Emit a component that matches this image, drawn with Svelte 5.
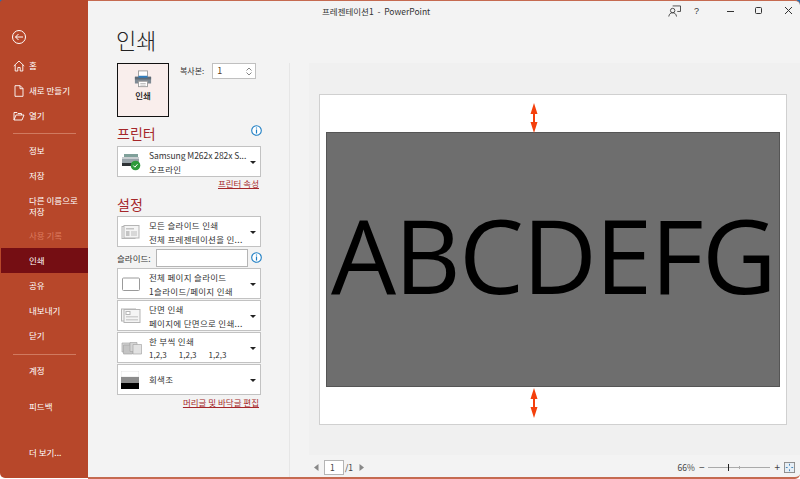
<script>
  const navTop = [
    { label: '홈', icon: 'home' },
    { label: '새로 만들기', icon: 'doc' },
    { label: '열기', icon: 'folder' }
  ];
  const chevron = 'M0 0h6l-3 3z';
</script>

<div class="window">
  <nav class="side">
    <svg class="back" width="16" height="16" viewBox="0 0 16 16" fill="none" stroke="#fff" stroke-width="1">
      <circle cx="8" cy="8" r="6.5" />
      <path d="M12 8H4.5M7.5 5 4.5 8l3 3" />
    </svg>
    {#each navTop as n}
      <div class="item icon-item">
        <svg class="nicon" width="12" height="12" viewBox="0 0 12 12" fill="none" stroke="#fff" stroke-width="0.9">
          {#if n.icon === 'home'}
            <path d="M.8 6 6 1l5.2 5M2.2 5v6h2.6V7.5h2.4V11h2.6V5" />
          {:else if n.icon === 'doc'}
            <path d="M2 .7h5.2L10 3.5v7.8H2zM7 .7v3h3" />
          {:else}
            <path d="M1 10V2.5h3l1 1h3.5v1.5M1 10l2-5h8l-2 5z" />
          {/if}
        </svg>
        <span>{n.label}</span>
      </div>
    {/each}
    <div class="rule first"></div>
    <div class="item">정보</div>
    <div class="item">저장</div>
    <div class="item double">다른 이름으로<br />저장</div>
    <div class="item muted">사용 기록</div>
    <div class="item active">인쇄</div>
    <div class="item">공유</div>
    <div class="item">내보내기</div>
    <div class="item">닫기</div>
    <div class="rule second"></div>
    <div class="item">계정</div>
    <div class="item account">피드백</div>
    <div class="item more">더 보기...</div>
  </nav>

  <main class="main">
    <header class="titlebar">
      <div class="doc-title">프레젠테이션1&nbsp; -&nbsp; PowerPoint</div>
      <div class="win-btns">
        <svg width="13" height="12" viewBox="0 0 14 13" fill="none" stroke="#333" stroke-width="0.9">
          <path d="M5 1h8.500v6H10" />
          <circle cx="5" cy="6" r="2.400" />
          <path d="M.8 12.500c.4-2.800 2-4.100 4.200-4.100S8.800 9.700 9.200 12.500" />
        </svg>
        <span class="help">?</span>
        <svg width="10" height="10" viewBox="0 0 10 10" stroke="#333" fill="none"><path d="M1 5.500h7" /></svg>
        <svg width="10" height="10" viewBox="0 0 10 10" stroke="#333" fill="none"><rect x="1.500" y="1.500" width="6" height="6" rx="1" /></svg>
        <svg width="10" height="10" viewBox="0 0 10 10" stroke="#333" fill="none"><path d="M1 1l7 7M8 1 1 8" /></svg>
      </div>
    </header>

    <div class="content">
      <section class="panel">
        <h1>인쇄</h1>
        <div class="print-row">
          <button class="print-btn">
            <svg width="18" height="18" viewBox="0 0 20 20">
              <rect x="5" y="1" width="10" height="6" fill="#fff" stroke="#9a9a9a" />
              <path d="M1 7.500h18V15H1z" fill="#7f8a94" />
              <rect x="1" y="7.500" width="18" height="3" fill="#5f6b76" />
              <rect x="5" y="6.500" width="10" height="2" fill="#2f7fc1" />
              <rect x="5" y="12.500" width="10" height="6" fill="#fff" stroke="#9a9a9a" />
              <path d="M7 15h6M7 16.800h6" stroke="#bbb" />
            </svg>
            <span>인쇄</span>
          </button>
          <label class="copies">
            <span>복사본:</span>
            <div class="spin">
              <span class="spin-val">1</span>
              <div class="spin-arrows">
                <svg width="6" height="4" viewBox="0 0 6 4" fill="none" stroke="#666" stroke-width="0.8"><path d="M.5 3.500 3 1l2.500 2.500" /></svg>
                <svg width="6" height="4" viewBox="0 0 6 4" fill="none" stroke="#666" stroke-width="0.8"><path d="M.5.500 3 3 5.500.500" /></svg>
              </div>
            </div>
          </label>
        </div>

        <div class="heading-row printer-head">
          <h2>프린터</h2>
          <svg class="info" width="11" height="11" viewBox="0 0 11 11"><circle cx="5.500" cy="5.500" r="4.800" fill="#fff" stroke="#1f7fc4" stroke-width="1.100" /><path d="M5.500 2.400v1.200M5.500 4.600v3.800" stroke="#1f7fc4" stroke-width="1.200" /></svg>
        </div>
        <div class="dd">
          <svg class="dd-icon" width="20" height="18" viewBox="0 0 20 18">
            <rect x="3" y="1" width="14" height="3" fill="#7fa09a" />
            <rect x="1" y="4" width="17" height="8" fill="#9aa4aa" />
            <rect x="1" y="4" width="17" height="2" fill="#c8cdd0" />
            <rect x="1" y="10" width="17" height="3" fill="#2e3336" />
            <circle cx="14.500" cy="12.500" r="4.800" fill="#2e9a3c" />
            <path d="M12.300 12.500l1.600 1.700 2.600-3" fill="none" stroke="#fff" />
          </svg>
          <div class="dd-text"><div class="latin">Samsung M262x 282x S...</div><div>오프라인</div></div>
          <svg class="caret" width="6" height="3" viewBox="0 0 6 3"><path d={chevron} /></svg>
        </div>
        <div class="link-row"><a href="#p">프린터 속성</a></div>

        <h2 class="settings">설정</h2>
        <div class="dd">
          <svg class="dd-icon" width="20" height="16" viewBox="0 0 20 16" fill="#f4f4f4" stroke="#b5b5b5">
            <rect x="1" y="2.500" width="13" height="12" />
            <rect x="3" y="1.500" width="15" height="12.500" />
            <rect x="5" y="4" width="8" height="1.500" fill="#c4c4c4" stroke="none" />
            <rect x="5" y="7" width="3.500" height="5" fill="#c4c4c4" stroke="none" />
            <rect x="10" y="7" width="6" height="5" fill="#d8d8d8" stroke="none" />
          </svg>
          <div class="dd-text"><div>모든 슬라이드 인쇄</div><div>전체 프레젠테이션을 인...</div></div>
          <svg class="caret" width="6" height="3" viewBox="0 0 6 3"><path d={chevron} /></svg>
        </div>
        <div class="slides-row">
          <span class="slides-label">슬라이드:</span>
          <div class="slides-input"></div>
          <svg class="info" width="11" height="11" viewBox="0 0 11 11"><circle cx="5.500" cy="5.500" r="4.800" fill="#fff" stroke="#1f7fc4" stroke-width="1.100" /><path d="M5.500 2.400v1.200M5.500 4.600v3.800" stroke="#1f7fc4" stroke-width="1.200" /></svg>
        </div>
        <div class="dd stacked">
          <svg class="dd-icon" width="20" height="16" viewBox="0 0 20 16"><rect x="1.500" y="2" width="17" height="12.500" rx="1" fill="#fff" stroke="#9a9a9a" /></svg>
          <div class="dd-text"><div>전체 페이지 슬라이드</div><div>1슬라이드/페이지 인쇄</div></div>
          <svg class="caret" width="6" height="3" viewBox="0 0 6 3"><path d={chevron} /></svg>
        </div>
        <div class="dd stacked">
          <svg class="dd-icon" width="20" height="16" viewBox="0 0 20 16" fill="#f4f4f4" stroke="#b5b5b5">
            <rect x=".5" y="1" width="14" height="12" />
            <rect x="3" y="1.500" width="16" height="13" />
            <rect x="5" y="3.500" width="4" height="3" fill="#fff" />
            <rect x="5" y="8" width="12" height="1.500" fill="#d0d0d0" stroke="none" />
            <rect x="5" y="11" width="12" height="1.500" fill="#d0d0d0" stroke="none" />
          </svg>
          <div class="dd-text"><div>단면 인쇄</div><div>페이지에 단면으로 인쇄...</div></div>
          <svg class="caret" width="6" height="3" viewBox="0 0 6 3"><path d={chevron} /></svg>
        </div>
        <div class="dd stacked">
          <svg class="dd-icon" width="21" height="14" viewBox="0 0 21 14" fill="#d4d4d4" stroke="#a8a8a8" stroke-width="0.7">
            <path d="M1 2h8v9H1z" /><path d="M2.500 4h9v9h-9z" fill="#c4c4c4" />
            <path d="M9 1.500h7v9H9z" /><path d="M12 3.500h8.500V13H12z" fill="#e2e2e2" />
          </svg>
          <div class="dd-text"><div>한 부씩 인쇄</div><div class="collate"><span>1,2,3</span><span>1,2,3</span><span>1,2,3</span></div></div>
          <svg class="caret" width="6" height="3" viewBox="0 0 6 3"><path d={chevron} /></svg>
        </div>
        <div class="dd stacked single">
          <svg class="dd-icon" width="18" height="18" viewBox="0 0 18 18">
            <rect width="18" height="6" fill="#fff" stroke="#ccc" stroke-width="0.5" />
            <rect y="6" width="18" height="6" fill="#8c8c8c" />
            <rect y="12" width="18" height="6" fill="#000" />
          </svg>
          <div class="dd-text"><div>회색조</div></div>
          <svg class="caret" width="6" height="3" viewBox="0 0 6 3"><path d={chevron} /></svg>
        </div>
        <div class="link-row bottom"><a href="#h">머리글 및 바닥글 편집</a></div>
      </section>

      <section class="preview">
        <div class="canvas">
          <div class="page">
            <div class="slide">ABCDEFG</div>
            <svg class="arrow top" width="8" height="30" viewBox="0 0 8 30"><path d="M4 0 7.500 11H5V19H7.500L4 30 .5 19H3V11H.5z" fill="#f4400c" /></svg>
            <svg class="arrow bot" width="8" height="30" viewBox="0 0 8 30"><path d="M4 0 7.500 11H5V19H7.500L4 30 .5 19H3V11H.5z" fill="#f4400c" /></svg>
          </div>
        </div>
        <footer class="status">
          <div class="pager">
            <svg width="5" height="7" viewBox="0 0 5 7"><path d="M4.500 0v7L0 3.500z" fill="#888" /></svg>
            <div class="page-box">1</div>
            <span>/1</span>
            <svg width="5" height="7" viewBox="0 0 5 7"><path d="M.5 0v7L5 3.500z" fill="#888" /></svg>
          </div>
          <div class="zoom">
            <span>66%</span>
            <span class="pm">−</span>
            <div class="slider"><i class="thumb"></i><i class="mid"></i></div>
            <span class="pm">+</span>
            <svg width="11" height="11" viewBox="0 0 12 12"><rect x=".5" y=".5" width="11" height="11" fill="#e6eef5" stroke="#8a8a8a" /><path d="M6 2v2M6 8v2M2 6h2M8 6h2" stroke="#3a7fb5" /></svg>
          </div>
        </footer>
      </section>
    </div>
  </main>
</div>

<style>
  :global(body) { margin: 0; }
  .window {
    width: 800px;
    height: 479px;
    display: flex;
    overflow: hidden;
    font-family: "Noto Sans CJK KR", "Noto Sans", sans-serif;
    background: linear-gradient(#1f6fb5 0 20px, #fff 20px);
  }
  .side {
    width: 88px;
    height: 478px;
    flex: none;
    background: #b7472a;
    color: #fff;
    font-size: 8.500px;
    display: flex;
    flex-direction: column;
    border-top-left-radius: 3px;
    border-bottom-left-radius: 5px;
  }
  .back { margin: 29px 0 8px 11px; flex: none; }
  .item {
    height: 25px;
    line-height: 25px;
    padding-left: 29px;
    flex: none;
    white-space: nowrap;
  }
  .icon-item { display: flex; align-items: center; padding-left: 13px; }
  .icon-item span { margin-left: 4px; }
  .nicon { flex: none; }
  .double { height: 35px; line-height: 11px; padding-top: 7px; box-sizing: border-box; }
  .muted { color: #dc7a5e; height: 24px; }
  .active { background: #750e13; margin-left: 1px; padding-left: 28px; height: 25px; margin-top: 1px; }
  .rule { height: 1px; background: #d07a60; margin: 0 12px 0 13px; flex: none; }
  .first { margin-top: 5px; margin-bottom: 4px; }
  .second { margin-top: 6px; margin-bottom: 3px; }
  .account { margin-top: 11px; }
  .more { margin-top: 21px; }

  .main {
    flex: 1;
    height: 479px;
    box-sizing: border-box;
    background: #f3f3f3;
    border-top: 1px solid #c56a50;
    border-bottom: 2px solid #c56a50;
    border-top-right-radius: 5px;
    border-bottom-right-radius: 5px;
    display: flex;
    flex-direction: column;
    min-width: 0;
  }
  .titlebar {
    height: 19px;
    flex: none;
    display: flex;
    align-items: center;
    color: #333;
    font-size: 8.500px;
  }
  .doc-title { margin-left: 234px; white-space: nowrap; width: 346px; flex: none; }
  .win-btns { display: flex; align-items: center; flex: 1; }
  .win-btns svg:nth-child(3) { margin-left: 27px; }
  .win-btns svg:nth-child(4) { margin-left: 18px; }
  .win-btns svg:nth-child(5) { margin-left: 20px; }
  .help { margin-left: 13px; font-size: 9px; font-family: "Liberation Sans", sans-serif; }

  .content { flex: 1; display: flex; min-height: 0; }
  .panel {
    width: 202px;
    flex: none;
    box-sizing: border-box;
    padding: 0 29px;
    border-right: 1px solid #e6e6e6;
    margin-top: 43px;
  }
  h1 {
    margin: -41px 0 0 -1px;
    height: 41px;
    font-size: 22px;
    font-weight: 300;
    line-height: 35px;
    color: #222;
  }
  .print-row { display: flex; align-items: flex-start; }
  .print-btn {
    width: 52px;
    height: 54px;
    box-sizing: border-box;
    border: 1px solid #111;
    background: #f9eeec;
    padding: 6px 0 0;
    display: flex;
    flex-direction: column;
    align-items: center;
    gap: 1px;
    font: 500 8.500px "Noto Sans CJK KR", sans-serif;
    color: #111;
    flex: none;
  }
  .copies { display: flex; align-items: flex-start; margin-left: 11px; font-size: 8px; color: #333; line-height: 16px; }
  .spin {
    margin-left: 8px;
    width: 44px;
    height: 16px;
    box-sizing: border-box;
    background: #fff;
    border: 1px solid #c0c0c0;
    display: flex;
    justify-content: space-between;
    align-items: center;
    padding: 0 3px 0 4px;
  }
  .spin-val { color: #5a3a22; font-size: 9px; }
  .spin-arrows { display: flex; flex-direction: column; gap: 1px; }

  h2 {
    margin: 0;
    font-size: 14px;
    font-weight: 400;
    color: #a5272a;
    line-height: 20px;
  }
  .heading-row { display: flex; justify-content: space-between; align-items: flex-start; width: 145px; }
  .printer-head { margin-top: 7px; height: 22px; }
  .printer-head h2 { margin-top: -1px; }
  .printer-head .info { margin-top: 1px; }
  .settings { margin-top: 3px; height: 22px; }
  .dd {
    width: 144px;
    height: 31px;
    box-sizing: border-box;
    background: #fff;
    border: 1px solid #c2c2c2;
    display: flex;
    align-items: center;
    font-size: 8.500px;
    letter-spacing: .3px;
    color: #333;
    position: relative;
  }
  .stacked { margin-bottom: 1px; }
  .dd-icon { flex: none; position: absolute; left: 3px; top: 50%; transform: translateY(-50%); }
  .dd-text { margin-left: 31px; line-height: 14px; white-space: nowrap; width: 102px; }
  .latin { letter-spacing: -.05px; }
  .single .dd-text { margin-top: -2px; }
  .collate { display: flex; gap: 12px; font-size: 8px; letter-spacing: 0; }
  .caret { position: absolute; right: 4px; top: 14px; }
  .caret path { fill: #222; }
  .link-row { width: 142px; text-align: right; font-size: 8.500px; line-height: 15px; height: 15px; margin-top: -1px; }
  .link-row.bottom { margin-top: -1px; }
  a { color: #a5272a; text-decoration: underline; }
  .slides-row { display: flex; align-items: center; height: 21px; font-size: 8.500px; color: #333; }
  .slides-label { width: 39px; flex: none; white-space: nowrap; }
  .slides-input { width: 92px; height: 18px; flex: none; box-sizing: border-box; background: #fff; border: 1px solid #b5b5b5; }
  .slides-row .info { margin-left: 3px; flex: none; }

  .preview { flex: 1; display: flex; flex-direction: column; min-width: 0; }
  .canvas {
    height: 392px;
    margin: 43px 0 0 19px;
    flex: none;
    background: #f0f0f0;
    padding: 31px 0 0 10px;
    box-sizing: border-box;
  }
  .page {
    width: 468px;
    height: 331px;
    box-sizing: border-box;
    background: #fff;
    border: 1px solid #d0d0d0;
    padding: 37px 6px;
    position: relative;
  }
  .slide {
    height: 255px;
    background: #6e6e6e;
    border: 1px solid #555;
    box-sizing: border-box;
    color: #000;
    font-family: "Open Sans", sans-serif;
    font-size: 103px;
    letter-spacing: -1.800px;
    line-height: 243px;
    text-align: center;
    overflow: hidden;
    white-space: nowrap;
  }
  .arrow { position: absolute; left: 210px; }
  .arrow.top { top: 8px; }
  .arrow.bot { bottom: 6px; }
  .status {
    flex: 1;
    display: flex;
    justify-content: space-between;
    align-items: center;
    font-size: 8.500px;
    color: #444;
    padding: 2px 5px 0 24px;
  }
  .pager { display: flex; align-items: center; }
  .page-box { width: 20px; height: 15px; margin: 0 1px 0 5px; background: #fff; border: 1px solid #b5b5b5; box-sizing: border-box; line-height: 13px; padding-left: 5px; }
  .pager span { margin-right: 6px; }
  .zoom { display: flex; align-items: center; gap: 4px; }
  .pm { font-size: 10px; line-height: 10px; }
  .slider { width: 62px; height: 1px; background: #aaa; position: relative; }
  .thumb { position: absolute; left: 20px; top: -3px; width: 1px; height: 7px; background: #222; }
  .mid { position: absolute; left: 31px; top: -1px; width: 1px; height: 3px; background: #aaa; }
</style>
